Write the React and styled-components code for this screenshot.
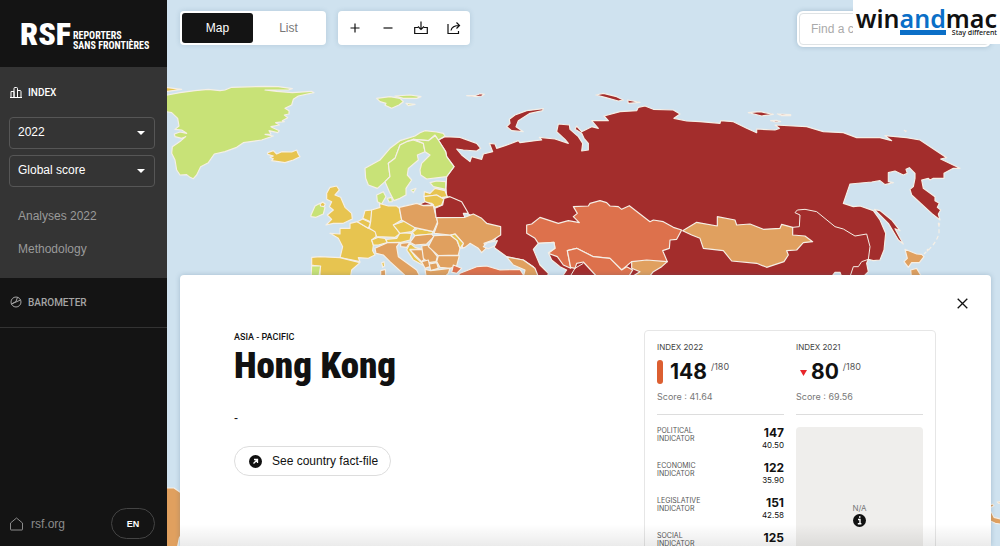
import React, { useState } from 'react';
import styled, { createGlobalStyle } from 'styled-components';

const GREEN = '#c8e277';
const YELLOW = '#e7c450';
const ORANGE = '#e0a05f';
const CORAL = '#dd714c';
const RED = '#a32d2c';
const WATER = '#cfe2ef';

// every region has its own origin, one map unit is a third of a pixel
const regions = [
  {
    x: 495,
    y: 210,
    shapes: [
      [YELLOW, '-10,53 8,53 50,58 8,64 -10,66'],
      [GREEN, '-10,78 8,75 45,68 90,62 130,58 165,62 180,60 200,52 300,49 340,50 382,56 370,60 300,60 335,64 382,68 440,64 447,68 400,78 385,88 380,105 360,115 372,122 372,132 358,135 368,143 352,152 358,155 332,158 343,165 318,170 325,174 343,182 338,188 312,182 318,192 300,193 325,198 290,210 235,218 215,232 180,245 148,252 130,278 107,290 95,315 85,326 75,322 65,314 45,315 35,300 30,270 20,250 22,230 48,212 62,200 50,205 30,200 28,192 45,186 65,190 50,180 30,178 42,168 38,145 20,128 -10,122'],
      [YELLOW, '308,248 325,242 335,252 350,245 380,246 395,240 400,252 405,260 385,270 360,278 320,272 325,266 315,262 325,258 308,253'],
    ],
  },
  {
    x: 900,
    y: 240,
    shapes: [
      [GREEN, '230,55 270,50 300,55 310,65 297,75 275,85 255,76 258,70 240,65'],
      [GREEN, '285,48 330,45 363,50 350,55 310,55'],
      [GREEN, '318,70 345,73 325,77'],
      [RED, '500,47 525,47 540,41 553,43 545,48 530,50'],
      [GREEN, '195,265 240,240 270,205 300,182 345,168 360,158 375,152 410,156 430,160 435,168 415,180 405,165 385,182 340,178 320,185 300,195 285,235 265,250 270,290 255,305 232,325 205,315 197,295'],
      [GREEN, '265,250 285,235 300,195 320,185 340,180 370,190 375,215 352,225 355,240 325,265 322,285 335,300 318,325 318,345 300,355 282,362 268,335 255,305 270,290'],
      [GREEN, '340,178 385,182 405,167 415,180 437,215 440,230 462,260 440,290 380,297 362,285 360,270 365,250 390,225 375,215 370,190'],
      [GREEN, '390,308 410,303 437,305 437,328 400,320'],
      [GREEN, '333,330 348,325 340,338'],
      [YELLOW, '373,335 390,340 405,325 435,332 442,350 425,353 410,345 372,350'],
      [YELLOW, '372,350 410,345 432,358 425,375 405,382 395,370 375,368'],
      [RED, '360,372 375,365 400,374 365,377'],
      [GREEN, '230,345 250,335 258,350 245,372 232,365'],
      [GREEN, '262,355 275,352 277,365 267,366'],
      [YELLOW, '80,340 90,322 110,318 118,330 105,345 122,352 135,382 155,400 157,417 130,430 100,430 78,435 95,418 82,405 100,390 88,380 95,365 80,358'],
      [GREEN, '33,405 45,378 60,370 75,382 70,402 48,412 33,410'],
      [YELLOW, '60,372 68,366 76,372 72,380 62,378'],
      [YELLOW, '90,460 120,462 120,445 150,445 150,430 172,425 205,445 230,455 228,470 215,480 220,495 218,512 225,525 205,535 175,533 180,545 120,533 128,500 115,475'],
      [YELLOW, '35,532 60,530 120,533 180,548 155,570 150,600 60,600 60,560 35,555'],
      [GREEN, '35,557 62,558 55,600 33,600'],
      [YELLOW, '190,410 195,392 218,390 212,425 188,415'],
      [YELLOW, '172,425 188,417 212,428 205,445'],
      [YELLOW, '215,390 240,382 238,370 265,378 290,378 298,385 305,420 280,435 300,460 285,472 230,470 225,455 208,445 212,425'],
      [YELLOW, '215,480 235,472 255,475 262,488 235,495 220,495'],
      [YELLOW, '262,488 258,478 290,475 300,458 335,460 330,480 300,488'],
      [YELLOW, '280,435 315,423 350,440 335,455 300,460'],
      [YELLOW, '337,458 352,445 400,455 395,462 345,467'],
      [ORANGE, '298,382 350,370 370,377 400,377 408,410 413,425 400,455 345,443 305,420'],
      [RED, '405,385 428,375 432,355 450,350 485,365 505,400 490,400 495,413 408,412'],
      [ORANGE, '225,505 262,488 300,487 290,500 295,530 350,570 365,600 330,600 270,545 250,525 228,520'],
      [ORANGE, '302,490 330,487 320,502 302,500'],
      [YELLOW, '320,510 330,490 345,502 368,508 330,508 345,530 377,560 340,540'],
      [ORANGE, '330,487 345,467 395,462 402,470 380,492 345,495'],
      [ORANGE, '330,510 368,508 375,535 365,545'],
      [ORANGE, '365,498 385,495 412,530 408,545 385,548 370,535'],
      [ORANGE, '402,467 450,465 470,480 480,505 475,525 415,527 385,500'],
      [ORANGE, '415,527 478,527 470,558 450,565 420,562 410,545'],
      [ORANGE, '365,545 385,540 390,560 375,565'],
      [ORANGE, '388,552 410,548 415,565 392,572'],
      [ORANGE, '375,568 392,572 450,565 445,580 425,600 380,600'],
      [YELLOW, '245,548 252,545 254,558 248,562'],
      [ORANGE, '242,572 256,568 258,600 242,600'],
      [ORANGE, '402,460 413,430 410,413 495,412 520,402 545,415 560,430 602,440 602,465 575,482 552,490 558,505 545,518 535,505 510,490 495,502 485,505 490,490 465,462 450,465'],
      [YELLOW, '452,466 465,462 490,490 480,505 472,482'],
      [CORAL, '460,555 485,565 470,580 455,577'],
      [CORAL, '480,580 530,560 560,558 600,570 660,568 680,600 460,600'],
    ],
  },
  {
    x: 1440,
    y: 240,
    shapes: [
      [RED, '80,140 90,130 88,118 105,105 140,92 190,86 188,92 150,100 115,122 108,140 130,155 95,152'],
      [RED, '348,45 370,40 410,50 430,60 415,63 375,52'],
      [RED, '443,60 480,67 445,70'],
      [ORANGE, '80,531 130,540 165,565 175,590 130,590 135,570 100,555'],
      [CORAL, '140,435 155,432 180,412 235,430 265,422 298,428 280,410 292,400 280,380 325,378 330,370 360,362 380,368 390,378 415,380 425,388 448,377 510,425 520,420 550,425 580,442 605,450 590,478 570,480 568,505 548,512 562,545 455,545 425,570 390,535 340,530 290,505 262,512 272,565 250,555 232,530 205,520 225,505 222,487 175,490 165,475 140,460'],
      [CORAL, '262,512 290,505 340,530 390,535 425,570 440,560 458,570 440,600 360,600 310,546 290,550 285,565 272,562'],
      [ORANGE, '455,545 500,540 562,545 545,560 520,575 500,600 440,600 480,575 455,565'],
      [WATER, '160,508 175,490 222,487 225,505 205,518 215,540 240,560 260,570 240,600 200,600 205,580 180,555'],
      [WATER, '10,500 22,488 52,482 45,497 25,506'],
    ],
  },
  {
    x: 1980,
    y: 240,
    shapes: [
      [RED, '265,98 300,95 340,103 305,108'],
      [RED, '352,102 392,104 392,107 365,107'],
      [RED, '332,122 350,121 362,125 345,126'],
      [ORANGE, '68,452 110,427 172,438 172,410 225,420 230,435 270,432 310,448 360,445 365,433 398,442 398,465 435,468 458,485 430,488 410,510 380,512 385,525 372,545 320,562 290,550 215,543 190,512 130,505 120,475 95,465'],
    ],
  },
  {
    x: 2460,
    y: 270,
    shapes: [
      [RED, '253,121 259,123 257,125'],
      [RED, '163,358 180,362 215,390 240,422 225,416 250,462 235,450 205,400'],
      [RED, '355,400 359,402 356,405'],
      [RED, '322,478 327,479 322,483'],
      [ORANGE, '255,478 290,492 305,493 312,500 298,518 275,518 265,532 252,515 262,505'],
      [ORANGE, '272,540 290,535 305,560 275,570'],
      [WATER, '35,560 45,547 60,547 65,560'],
    ],
  },
  {
    x: 490,
    y: 1464,
    shapes: [[ORANGE, '0,0 32,0 55,16 60,130 48,150 40,190 0,190']],
  },
  {
    x: 2960,
    y: 1500,
    shapes: [
      [ORANGE, '8,16 18,12 22,17 14,22'],
      [ORANGE, '32,6 46,4 46,9 36,10'],
      [ORANGE, '0,30 14,36 22,52 46,58 46,73 26,70 0,58'],
    ],
  },
];

const russiaAndChina =
  '1315,420 1335,410 1380,412 1430,430 1442,445 1430,453 1390,450 1370,447 1385,465 1410,485 1415,470 1445,478 1450,462 1478,455 1468,430 1485,432 1490,445 1515,437 1555,422 1560,428 1605,422 1625,420 1618,412 1665,417 1705,430 1695,418 1670,395 1675,372 1708,375 1710,388 1735,410 1748,430 1745,453 1765,450 1765,430 1752,415 1745,400 1725,388 1730,378 1745,395 1775,380 1795,385 1775,362 1825,362 1812,348 1860,335 1910,332 1915,322 1935,318 1960,328 2020,330 2040,342 2022,355 2060,363 2100,365 2160,370 2162,362 2200,365 2240,385 2270,398 2270,387 2325,390 2338,385 2325,375 2420,380 2470,395 2530,398 2570,413 2640,413 2675,422 2655,407 2720,413 2760,420 2840,473 2822,477 2880,505 2860,505 2832,520 2832,535 2800,535 2790,540 2785,535 2765,540 2770,565 2805,590 2805,602 2818,610 2812,622 2822,630 2815,642 2820,660 2795,640 2735,585 2730,568 2740,560 2745,535 2745,520 2728,503 2718,508 2722,520 2710,525 2685,513 2665,518 2665,545 2680,548 2655,554 2640,542 2615,546 2550,552 2530,610 2560,620 2580,618 2620,632 2640,660 2657,700 2652,750 2640,780 2620,782 2605,778 2600,790 2605,815 2570,850 1620,850 1600,800 1570,780 1520,770 1485,745 1480,730 1500,690 1400,640 1370,600 1340,590 1338,565 1340,530 1362,500 1340,470 1337,455';

const borders = [
  '2378,682 2398,680 2400,645 2385,638 2392,630 2415,628 2450,635 2505,680 2530,687 2565,708 2600,702 2610,740 2605,778',
  '2605,778 2585,785 2575,800 2560,800 2550,830',
  '1710,830 1725,805 1750,790',
];

const navItems = ['Analyses 2022', 'Methodology'];

const indicators = [
  { name: 'Political', rank: '147', score: '40.50' },
  { name: 'Economic', rank: '122', score: '35.90' },
  { name: 'Legislative', rank: '151', score: '42.58' },
  { name: 'Social', rank: '125', score: '54.41' },
  { name: 'Security', rank: '139', score: '33.79' },
];

function WorldMap() {
  return (
    <MapSvg viewBox="501 0 2499 1638" preserveAspectRatio="xMinYMin slice" aria-hidden="true">
      <g stroke="#f5efe6" strokeWidth="3.5" strokeLinejoin="round">
        <polygon points={russiaAndChina} fill={RED} />
        {regions.map((region) => (
          <g key={`${region.x}-${region.y}`} transform={`translate(${region.x} ${region.y})`}>
            {region.shapes.map(([fill, points]) => (
              <polygon key={points} points={points} fill={fill} />
            ))}
          </g>
        ))}
        {borders.map((points) => (
          <polyline key={points} points={points} fill="none" strokeWidth="3" />
        ))}
        <path d="M2817 668L2817 700Q2810 725 2790 745L2772 762" fill="none" strokeDasharray="12 8" />
      </g>
    </MapSvg>
  );
}

function Select({ label, options }) {
  return (
    <SelectBox>
      <SelectInput aria-label={label}>
        {options.map((option) => (
          <option key={option}>{option}</option>
        ))}
      </SelectInput>
      <svg width="8" height="4" viewBox="0 0 8 4">
        <path d="M0 0h8L4 4z" fill="#fff" />
      </svg>
    </SelectBox>
  );
}

function Summary({ year, rank, score, children }) {
  return (
    <SummaryBox>
      <SummaryTitle>INDEX {year}</SummaryTitle>
      <RankRow>
        {children}
        <Rank>{rank}</Rank>
        <Total>/180</Total>
      </RankRow>
      <Score>Score : {score}</Score>
    </SummaryBox>
  );
}

export default function App() {
  const [view, setView] = useState('Map');

  return (
    <Page>
      <GlobalStyle />
      <Sidebar>
        <Logo href="#home">
          <LogoMark>RSF</LogoMark>
          <LogoName>
            REPORTERS
            <br />
            SANS FRONTIÈRES
          </LogoName>
        </Logo>
        <IndexSection>
          <SectionTitle $active>
            <svg width="12" height="11" viewBox="0 0 12 11" fill="none" stroke="currentColor">
              <path d="M1 10.5V4.5h3v6M4 10.5V1.5Q4 .5 5 .5h1.500q1 0 1 1v9M7.500 3.500h2.500q1 0 1 1v6M0 10.500h12" />
            </svg>
            INDEX
          </SectionTitle>
          <Select label="Year" options={['2022', '2021']} />
          <Select label="Score" options={['Global score', 'Political score']} />
          <SubNav>
            {navItems.map((item) => (
              <SubLink key={item} href="#index">
                {item}
              </SubLink>
            ))}
          </SubNav>
        </IndexSection>
        <BarometerSection>
          <SectionTitle>
            <svg width="12" height="12" viewBox="0 0 12 12" fill="none" stroke="currentColor">
              <circle cx="6" cy="6" r="5" />
              <path d="M1.500 8L6 5.500M6 5.500L7.500 1.200M1.500 8L10.500 4" />
            </svg>
            BAROMETER
          </SectionTitle>
        </BarometerSection>
        <SidebarFooter>
          <HomeLink href="#rsf">
            <svg width="13" height="14" viewBox="0 0 13 14" fill="none" stroke="currentColor">
              <path d="M.5 12.500V6L6.500 1l6 5v6.500q0 .5-.5.5H1q-.5 0-.5-.5z" />
            </svg>
            rsf.org
          </HomeLink>
          <LangButton>EN</LangButton>
        </SidebarFooter>
      </Sidebar>

      <Main>
        <WorldMap />
        <Toolbar>
          <ToggleGroup>
            {['Map', 'List'].map((name) => (
              <ToggleButton key={name} $active={view === name} onClick={() => setView(name)}>
                {name}
              </ToggleButton>
            ))}
          </ToggleGroup>
          <Tools>
            <ToolButton aria-label="Zoom in">
              <svg width="14" height="14" viewBox="0 0 14 14">
                <path d="M7 2.500v9M2.500 7h9" />
              </svg>
            </ToolButton>
            <ToolButton aria-label="Zoom out">
              <svg width="14" height="14" viewBox="0 0 14 14">
                <path d="M2.500 7h9" />
              </svg>
            </ToolButton>
            <ToolButton aria-label="Download">
              <svg width="14" height="14" viewBox="0 0 14 14">
                <path d="M4 6.500H.7v6h12.600v-6H10M7 .5v8M4 5.500l3 3 3-3" />
              </svg>
            </ToolButton>
            <ToolButton aria-label="Share">
              <svg width="14" height="14" viewBox="0 0 14 14">
                <path d="M1 3v9.500h10.500V10M4 9.500Q5 4.500 12.500 4.500M9.500 1.500l3 3-3 3" />
              </svg>
            </ToolButton>
          </Tools>
          <Search type="text" aria-label="Find a country" placeholder="Find a country" />
        </Toolbar>

        <Panel>
          <Country>
            <Zone>ASIA - PACIFIC</Zone>
            <Name>Hong Kong</Name>
            <Note>-</Note>
            <FactLink href="#hong-kong">
              <svg width="13" height="13" viewBox="0 0 13 13">
                <circle cx="6.500" cy="6.500" r="6.500" fill="#111" />
                <path d="M4.500 8.500l4-4M5 4.500h3.500V8" stroke="#fff" strokeWidth="1.300" fill="none" />
              </svg>
              See country fact-file
            </FactLink>
          </Country>
          <Card>
            <Summary year="2022" rank="148" score="41.64">
              <Bar />
            </Summary>
            <Summary year="2021" rank="80" score="69.56">
              <Down width="7" height="6" viewBox="0 0 7 6">
                <path d="M0 0h7L3.500 6z" fill="#e8262b" />
              </Down>
            </Summary>
            <IndicatorList>
              {indicators.map((item) => (
                <Indicator key={item.name}>
                  <IndicatorName>
                    {item.name}
                    <br />
                    indicator
                  </IndicatorName>
                  <div>
                    <IndicatorRank>{item.rank}</IndicatorRank>
                    <IndicatorScore>{item.score}</IndicatorScore>
                  </div>
                </Indicator>
              ))}
            </IndicatorList>
            <NotAvailable>
              N/A
              <svg width="13" height="13" viewBox="0 0 13 13">
                <circle cx="6.500" cy="6.500" r="6.500" fill="#111" />
                <path d="M5 5.500h2v4M4.800 9.800h3.600M6 3h1.500" stroke="#fff" strokeWidth="1.400" fill="none" />
              </svg>
            </NotAvailable>
          </Card>
          <CloseButton aria-label="Close">
            <svg width="11" height="11" viewBox="0 0 11 11">
              <path d="M.7.7l9.600 9.600M10.300.7L.7 10.300" stroke="#111" strokeWidth="1.300" />
            </svg>
          </CloseButton>
        </Panel>

        <Watermark>
          <Brand>
            win<BrandAccent>and</BrandAccent>mac
          </Brand>
          <Tagline>Stay different</Tagline>
        </Watermark>
      </Main>
    </Page>
  );
}

const GlobalStyle = createGlobalStyle`
  * {
    box-sizing: border-box;
  }
  body {
    margin: 0;
    font-family: "Liberation Sans", sans-serif;
    font-size: 12px;
    color: #111;
  }
  button, input, select {
    font: inherit;
  }
  a {
    color: inherit;
    text-decoration: none;
  }
`
const Page = styled.div`
  display: flex;
  height: 100vh;
  overflow: hidden;
`
const Sidebar = styled.aside`
  display: flex;
  flex-direction: column;
  flex: 0 0 167px;
  background: #141414;
  color: #fff;
`
const Logo = styled.a`
  display: flex;
  align-items: flex-end;
  gap: 2px;
  height: 67px;
  padding: 0 0 16px 20px;
`
const LogoMark = styled.span`
  font: 900 32px/34px "Roboto Condensed", Roboto, sans-serif;
`
const LogoName = styled.span`
  font: bold 10px/10px "Roboto Condensed", Roboto, sans-serif;
  white-space: nowrap;
`
const IndexSection = styled.section`
  display: flex;
  flex-direction: column;
  gap: 6px;
  height: 211px;
  padding: 17px 12px 0 9px;
  background: #343434;
`
const SectionTitle = styled.h2`
  display: flex;
  align-items: center;
  gap: 6px;
  height: 16px;
  margin: 0;
  padding-left: 1px;
  font: 500 10px Roboto, sans-serif;
  color: ${(props) => (props.$active ? '#fff' : '#a5a5a5')};
  ${(props) => props.$active && 'margin-bottom: 11px;'}
`
const SelectBox = styled.div`
  display: flex;
  align-items: center;
  height: 32px;
  padding-right: 9px;
  border: 1px solid #565656;
  border-radius: 4px;
`
const SelectInput = styled.select`
  flex: 1;
  height: 100%;
  padding: 0 0 2px 8px;
  border: 0;
  outline: 0;
  appearance: none;
  background: transparent;
  color: #fff;
`
const SubNav = styled.nav`
  display: flex;
  flex-direction: column;
  gap: 17px;
  padding: 15px 0 0 9px;
`
const SubLink = styled.a`
  line-height: 16px;
  color: #9a9a9a;
`
const BarometerSection = styled.section`
  padding: 16px 9px 17px;
  border-bottom: 1px solid #333;
`
const SidebarFooter = styled.footer`
  display: flex;
  align-items: center;
  justify-content: space-between;
  margin-top: auto;
  padding: 0 12px 7px 10px;
`
const HomeLink = styled.a`
  display: flex;
  align-items: center;
  gap: 8px;
  color: #8b8b8b;
`
const LangButton = styled.button`
  width: 44px;
  height: 31px;
  border: 1px solid #444;
  border-radius: 16px;
  background: transparent;
  color: #fff;
  font-size: 9px;
  font-weight: bold;
`
const Main = styled.main`
  position: relative;
  display: flex;
  flex: 1;
  flex-direction: column;
  justify-content: space-between;
  min-width: 0;
  padding: 11px 9px 0 13px;
  background: ${WATER};
`
const MapSvg = styled.svg`
  position: absolute;
  inset: 0;
  width: 100%;
  height: 100%;
`
const Toolbar = styled.div`
  position: relative;
  display: flex;
  gap: 12px;
`
const ToggleGroup = styled.div`
  display: flex;
  width: 146px;
  height: 34px;
  padding: 2px;
  border-radius: 4px;
  background: #fff;
  box-shadow: 0 0 5px rgba(60, 100, 130, 0.2);
`
const ToggleButton = styled.button`
  flex: 1;
  padding: 0;
  border: 0;
  border-radius: 3px;
  background: ${(props) => (props.$active ? '#141414' : 'transparent')};
  color: ${(props) => (props.$active ? '#fff' : '#777')};
`
const Tools = styled.div`
  display: flex;
  height: 34px;
  border-radius: 4px;
  background: #fff;
  box-shadow: 0 0 5px rgba(60, 100, 130, 0.2);
`
const ToolButton = styled.button`
  display: flex;
  align-items: center;
  justify-content: center;
  width: 33px;
  padding: 0;
  border: 0;
  background: transparent;

  svg {
    fill: none;
    stroke: #111;
    stroke-width: 1.2;
  }
`
const Search = styled.input`
  width: 194px;
  height: 36px;
  margin-left: auto;
  padding: 0 12px;
  border: 2px solid #fff;
  border-radius: 6px;
  outline: 1px solid #dfe3e5;
  outline-offset: -3px;
  background: #fff;
  box-shadow: 0 0 5px rgba(60, 100, 130, 0.3);

  &::placeholder {
    color: #aaa;
  }
`
const Watermark = styled.div`
  position: absolute;
  top: 0;
  right: 0;
  display: flex;
  flex-direction: column;
  align-items: flex-end;
  width: 147px;
  height: 44px;
  padding: 6px 3px 0;
  background: #fff;
`
const Brand = styled.span`
  display: flex;
  font: 600 25px/24px "Noto Sans", sans-serif;
  color: #111;
`
const BrandAccent = styled.span`
  border-bottom: 5px solid #0b6fc7;
  color: #0b6fc7;
`
const Tagline = styled.span`
  margin-top: -6px;
  font: 500 7px/8px "Noto Sans", sans-serif;
`
const Panel = styled.section`
  position: relative;
  display: grid;
  grid-template-columns: 1fr 292px 55px;
  align-items: start;
  height: calc(50vh - 2px);
  padding-left: 54px;
  overflow: hidden;
  border-radius: 4px 4px 0 0;
  background: #fff;
  box-shadow: 0 0 5px rgba(60, 100, 130, 0.3);

  &::after {
    content: "";
    position: absolute;
    inset: auto 0 0;
    height: 22px;
    background: linear-gradient(rgba(0, 0, 0, 0), rgba(0, 0, 0, 0.08));
    pointer-events: none;
  }
`
const Country = styled.div`
  display: flex;
  flex-direction: column;
  align-items: flex-start;
  padding-top: 56px;
`
const Zone = styled.span`
  font: 500 9px/12px Roboto, sans-serif;
`
const Name = styled.h1`
  margin: 0;
  font: 900 37px/46px "Roboto Condensed", Roboto, sans-serif;
`
const Note = styled.p`
  margin: 21px 0 20px;
  line-height: 16px;
`
const FactLink = styled.a`
  display: flex;
  align-items: center;
  gap: 10px;
  height: 30px;
  padding: 0 12px 0 14px;
  border: 1px solid #ddd;
  border-radius: 15px;
`
const Card = styled.div`
  display: grid;
  grid-template-columns: 1fr 1fr;
  gap: 12px;
  margin-top: 55px;
  padding: 10px 12px 12px;
  border: 1px solid #e6e6e6;
  border-radius: 4px;
  font-family: Inter, sans-serif;
`
const SummaryBox = styled.div`
  padding-bottom: 11px;
  border-bottom: 1px solid #ddd;
`
const SummaryTitle = styled.h3`
  margin: 0 0 4px;
  font-size: 8px;
  font-weight: 400;
  line-height: 12px;
  color: #444;
`
const RankRow = styled.div`
  display: flex;
  align-items: center;
  height: 30px;
`
const Bar = styled.span`
  width: 6px;
  height: 24px;
  margin-right: 7px;
  border-radius: 3px;
  background: #dc5f31;
`
const Down = styled.svg`
  margin: 2px 4px 0;
`
const Rank = styled.strong`
  font-size: 21px;
  line-height: 30px;
`
const Total = styled.span`
  align-self: flex-start;
  padding: 4px 0 0 4px;
  font-size: 9px;
  line-height: 12px;
  color: #555;
`
const Score = styled.p`
  margin: 4px 0 0;
  font-size: 9px;
  line-height: 12px;
  color: #777;
`
const IndicatorList = styled.ul`
  margin: 0;
  padding: 0;
  list-style: none;
`
const Indicator = styled.li`
  display: flex;
  justify-content: space-between;
  height: 35px;
  text-align: right;
`
const IndicatorName = styled.span`
  font-size: 7px;
  line-height: 8px;
  text-align: left;
  text-transform: uppercase;
  color: #555;
`
const IndicatorRank = styled.div`
  font-size: 12px;
  font-weight: bold;
  line-height: 12px;
`
const IndicatorScore = styled.div`
  font-size: 8px;
  line-height: 12px;
`
const NotAvailable = styled.div`
  display: flex;
  flex-direction: column;
  align-items: center;
  justify-content: center;
  gap: 1px;
  border-radius: 4px;
  background: #efeeec;
  color: #777;
  font-size: 8px;
`
const CloseButton = styled.button`
  justify-self: center;
  display: flex;
  margin-top: 19px;
  margin-right: 3px;
  padding: 4px;
  border: 0;
  background: transparent;
`
